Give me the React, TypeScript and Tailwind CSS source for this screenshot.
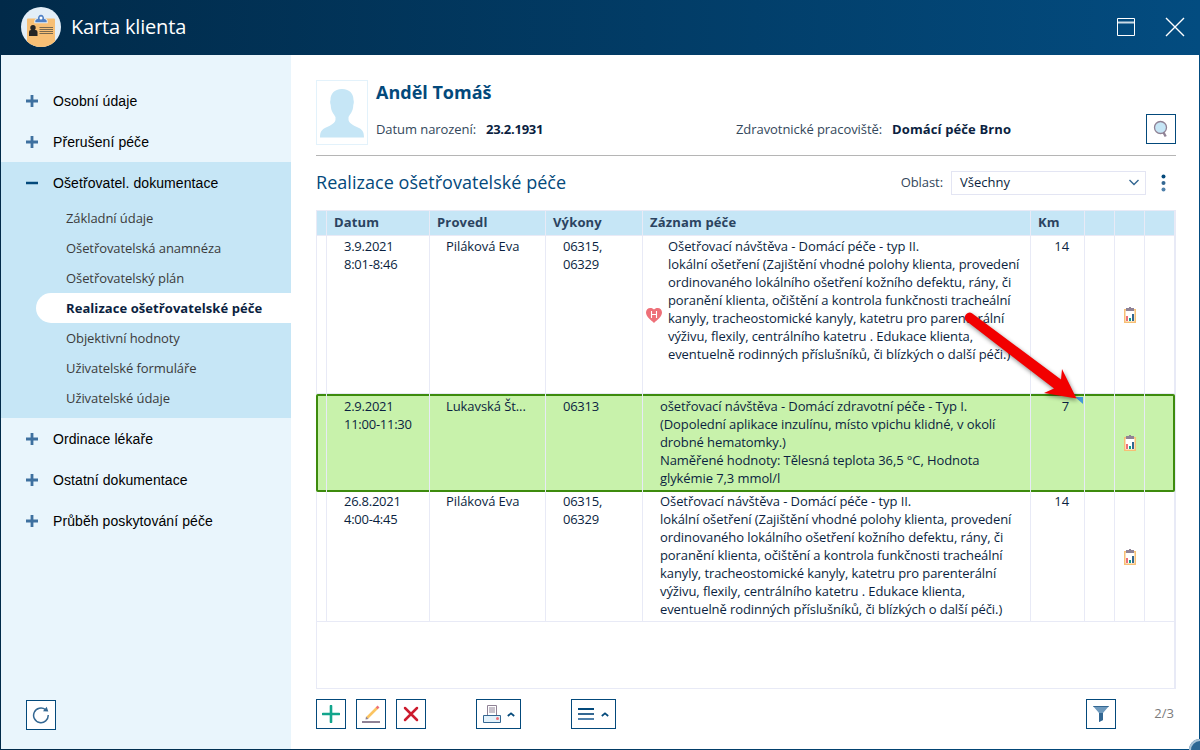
import type { ReactNode } from "react";
import clsx from "clsx";

const sections = ["Osobní údaje", "Přerušení péče"];
const bottomSections = ["Ordinace lékaře", "Ostatní dokumentace", "Průběh poskytování péče"];
const subItems = [
  "Základní údaje",
  "Ošetřovatelská anamnéza",
  "Ošetřovatelský plán",
  "Realizace ošetřovatelské péče",
  "Objektivní hodnoty",
  "Uživatelské formuláře",
  "Uživatelské údaje",
];
const activeItem = "Realizace ošetřovatelské péče";

const columns = ["", "Datum", "Provedl", "Výkony", "Záznam péče", "Km", "", "", ""];

const careNote = [
  "Ošetřovací návštěva - Domácí péče - typ II.",
  "lokální ošetření (Zajištění vhodné polohy klienta, provedení",
  "ordinovaného lokálního ošetření kožního defektu, rány, či",
  "poranění klienta, očištění a kontrola funkčnosti tracheální",
  "kanyly, tracheostomické kanyly, katetru pro parenterální",
  "výživu, flexily, centrálního katetru . Edukace klienta,",
  "eventuelně rodinných příslušníků, či blízkých o další péči.)",
];

type Visit = {
  id: number;
  date: string[];
  nurse: string;
  codes: string[];
  note: string[];
  km: number;
  hospital?: boolean;
  selected?: boolean;
  height: string;
};

const visits: Visit[] = [
  {
    id: 1,
    date: ["3.9.2021", "8:01-8:46"],
    nurse: "Piláková Eva",
    codes: ["06315,", "06329"],
    note: careNote,
    km: 14,
    hospital: true,
    height: "h-[158px]",
  },
  {
    id: 2,
    date: ["2.9.2021", "11:00-11:30"],
    nurse: "Lukavská Št...",
    codes: ["06313"],
    note: [
      "ošetřovací návštěva - Domácí zdravotní péče - Typ I.",
      "(Dopolední aplikace inzulínu, místo vpichu klidné, v okolí",
      "drobné hematomky.)",
      "Naměřené hodnoty: Tělesná teplota 36,5 °C, Hodnota",
      "glykémie 7,3 mmol/l",
    ],
    km: 7,
    selected: true,
    height: "h-[98px]",
  },
  {
    id: 3,
    date: ["26.8.2021", "4:00-4:45"],
    nurse: "Piláková Eva",
    codes: ["06315,", "06329"],
    note: careNote,
    km: 14,
    height: "h-[130px]",
  },
];

const gridCols = "grid grid-cols-[10px_103px_116px_97px_388px_54px_30px_30px_30px]";

function Lines({ items }: { items: string[] }) {
  return (
    <div>
      {items.map((line) => (
        <p key={line} className="whitespace-nowrap">
          {line}
        </p>
      ))}
    </div>
  );
}

function ToolButton({ wide, children }: { wide?: boolean; children: ReactNode }) {
  return (
    <button
      className={clsx(
        "flex h-[30px] items-center justify-center border border-[#03497b] bg-white",
        wide ? "w-[45px]" : "w-[30px]"
      )}
    >
      {children}
    </button>
  );
}

function CardLogo() {
  return (
    <svg width="40" height="40" viewBox="0 0 40 40">
      <clipPath id="logo">
        <circle cx="20" cy="20" r="20" />
      </clipPath>
      <g clipPath="url(#logo)">
        <rect width="40" height="40" fill="#e3eef7" />
        <rect x="6" y="11.500" width="28" height="30" rx="1" fill="#f7bf75" />
        <path
          d="M14.300 15.300v-1c0-1.500 1-2 2.500-2.300C17 9.500 18 7.800 20 7.800s3 1.700 3.200 4.200c1.500.3 2.500.8 2.500 2.300v1z"
          fill="#5080c4"
          stroke="#e3eef7"
          strokeWidth="2"
          paintOrder="stroke"
        />
        <circle cx="20" cy="11" r="1.500" fill="#fff" />
        <circle cx="12" cy="20.700" r="2.700" fill="#252525" />
        <path d="M8 29v-4q0-2 2-2h4.500q2 0 2 2v4z" fill="#252525" />
        <path d="M18.500 20.500h13.500M18.500 22.500h13.500M18.500 24.500h13.500M18.500 26.500h13.500" stroke="#77684f" strokeWidth="1" />
      </g>
    </svg>
  );
}

function PlusIcon() {
  return (
    <svg width="12" height="12" viewBox="0 0 12 12">
      <path d="M6 0v12M0 6h12" stroke="#3e709f" strokeWidth="2.800" />
    </svg>
  );
}

function ReportIcon() {
  return (
    <svg width="12" height="16" viewBox="0 0 12 16">
      <path d="M.75 2.750h10.500v12.500H.75z" fill="#fff" stroke="#f7bf75" strokeWidth="1.500" />
      <path d="M2 1h3V0h2v1h3v3H2z" fill="#8f8295" />
      <path d="M2 9h2v5H2z" fill="#ee7079" />
      <path d="M5 11h2v3H5z" fill="#12a18a" />
      <path d="M8 7h2v7H8z" fill="#336792" />
    </svg>
  );
}

function HeartIcon() {
  return (
    <svg width="16" height="15" viewBox="0 0 16 15">
      <path d="M8 15C5 12 0 9 0 4.500C0 2 1.800 0 4.300 0C6 0 7.300.7 8 1.500C8.700.7 10 0 11.700 0C14.200 0 16 2 16 4.500C16 9 11 12 8 15z" fill="#ee7079" />
      <path d="M5.500 3v7M10.500 3v7M5.500 6.500h5" stroke="#fff" strokeWidth="1.100" />
    </svg>
  );
}

function CaretUp() {
  return (
    <svg width="8" height="5" viewBox="0 0 8 5">
      <path d="M.8 4L4 1.300L7.200 4" fill="none" stroke="#03497b" strokeWidth="1.700" />
    </svg>
  );
}

function SectionRow({ label }: { label: string }) {
  return (
    <li className="flex h-[41px] items-center gap-[15px] pl-[25px]">
      <PlusIcon />
      <span className="pt-[2px]">{label}</span>
    </li>
  );
}

function Sidebar() {
  return (
    <aside className="flex w-[290px] shrink-0 flex-col bg-[#e9f5fc] pt-[25px] pb-[19px] font-['Liberation_Sans',Arial,sans-serif] text-[14px] tracking-[0.08px] text-black">
      <ul>
        {sections.map((label) => (
          <SectionRow key={label} label={label} />
        ))}
      </ul>
      <div className="h-[256px] bg-[#c6e6f6]">
        <div className="flex h-[41px] items-center gap-[15px] pl-[25px]">
          <svg width="12" height="12" viewBox="0 0 12 12">
            <path d="M0 6h12" stroke="#03497b" strokeWidth="2.500" />
          </svg>
          <span className="pt-[2px]">Ošetřovatel. dokumentace</span>
        </div>
        <ul className="font-['Open_Sans',sans-serif] text-[13px] tracking-[-0.08px] text-[#3b3b3b]">
          {subItems.map((item) => (
            <li
              key={item}
              className={clsx(
                "ml-[35px] flex h-[30px] items-center pt-[2px] pl-[30px]",
                item === activeItem && "rounded-l-full bg-white font-bold tracking-[0.07px] text-[#0b1f41]"
              )}
            >
              {item}
            </li>
          ))}
        </ul>
      </div>
      <ul>
        {bottomSections.map((label) => (
          <SectionRow key={label} label={label} />
        ))}
      </ul>
      <div className="mt-auto pl-[25px]">
        <ToolButton>
          <svg width="18" height="18" viewBox="0 0 18 18" fill="none">
            <path d="M16.200 9A7.300 7.300 0 1 1 13.500 3.700" stroke="#336792" strokeWidth="1.500" />
            <path d="M14.700.8l1.600 4.700-5.300-.3z" fill="#336792" />
          </svg>
        </ToolButton>
      </div>
    </aside>
  );
}

function ClientHeader() {
  return (
    <div className="flex h-[76px] border-b border-[#b5b5b5]">
      <div className="flex h-[65px] w-[52px] justify-center border border-[#e3f2fb] pt-2">
        <svg width="44" height="49" viewBox="0 0 44 49">
          <path d="M22 0C30 0 33.500 5 33.500 11C34 12 34 14 33.300 16C33 23 30 25 28.500 28V31C29.500 35 35 37 39 39C43 41 44 44 44 48.500H0C0 44 1 41 5 39C9 37 14.500 35 15.500 31V28C14 25 11 23 10.700 16C10 14 10 12 10.500 11C10.500 5 14 0 22 0z" fill="#c6e6f6" />
        </svg>
      </div>
      <div className="flex flex-1 flex-col pl-2">
        <h1 className="text-lg leading-6 font-bold text-[#03497b]">Anděl Tomáš</h1>
        <div className="mt-[15px] flex leading-[20px] tracking-[-0.07px] text-[#33475b]">
          <span className="w-[110px]">Datum narození:</span>
          <b className="w-[250px] tracking-[-0.25px] text-[#0b1f41]">23.2.1931</b>
          <span className="w-[156px]">Zdravotnické pracoviště:</span>
          <b className="tracking-[0.12px] text-[#0b1f41]">Domácí péče Brno</b>
        </div>
      </div>
      <div className="pt-[34px]">
        <ToolButton>
          <svg width="16" height="18" viewBox="0 0 16 18">
            <path d="M10.500 12.500l2.200 4" stroke="#8f8295" strokeWidth="2.400" />
            <circle cx="7.500" cy="7.500" r="6" fill="#c6e6f6" stroke="#8f8295" strokeWidth="1.300" />
          </svg>
        </ToolButton>
      </div>
    </div>
  );
}

function VisitRow({ visit }: { visit: Visit }) {
  const cell = "border-l border-[#e8eaf6]";
  const textCell = clsx(cell, visit.selected ? "pt-[3px]" : visit.hospital ? "pt-px" : "");
  return (
    <div
      className={clsx(
        gridCols,
        visit.height,
        visit.selected
          ? "relative -mr-px rounded-[2px] bg-[#c8f2ab] shadow-[inset_0_0_0_2px_#3d8b0d]"
          : "border-b border-[#e8eaf6]"
      )}
    >
      <div className={visit.selected ? "" : cell} />
      <div className={clsx(textCell, "pl-[17px] tracking-[-0.25px]")}>
        <Lines items={visit.date} />
      </div>
      <div className={clsx(textCell, "pl-4")}>{visit.nurse}</div>
      <div className={clsx(textCell, "pl-[17px] tracking-[-0.25px]")}>
        <Lines items={visit.codes} />
      </div>
      <div className={clsx(textCell, "flex", visit.hospital ? "pl-[3px]" : "pl-[17px]")}>
        {visit.hospital && (
          <div className="mr-[6px] flex items-center">
            <HeartIcon />
          </div>
        )}
        <Lines items={visit.note} />
      </div>
      <div className={clsx(textCell, "relative pr-[15px] text-right")}>
        {visit.km}
        {visit.selected && (
          <svg className="absolute top-[3px] right-px" width="8" height="7" viewBox="0 0 8 7">
            <path d="M0 0h8v7z" fill="#4398d8" />
          </svg>
        )}
      </div>
      <div className={cell} />
      <div className={clsx(cell, "flex items-center justify-center")}>
        <ReportIcon />
      </div>
      <div className={cell} />
    </div>
  );
}

function VisitTable() {
  return (
    <div className="relative mt-[15px] h-[479px] border-r-2 border-b border-[#e8eaf6] text-[13px] leading-[18px] tracking-[-0.085px] text-[#0b1f41]">
      <div className={clsx(gridCols, "h-[26px] border-y border-[#e8eaf6] bg-[#c6e6f6] leading-[23px] font-bold tracking-[0.16px] text-[#2b4360]")}>
        {columns.map((name, i) => (
          <div key={i} className="border-l border-[#e8eaf6] pl-[7px]">
            {name}
          </div>
        ))}
      </div>
      {visits.map((visit) => (
        <VisitRow key={visit.id} visit={visit} />
      ))}
      <div className="h-[66px] border-l border-[#e8eaf6]" />
      {/* pointer to the km note */}
      <svg className="absolute top-[95px] left-[639px] drop-shadow-[1px_2px_2px_rgba(0,0,0,0.45)]" width="130" height="110" viewBox="0 0 130 110">
        <path d="M17.300 8.400L106 74.500L107 64L121.500 93.500L89 88L99 83.500L10.700 15.600A5 5 0 0 1 17.300 8.400z" fill="#f20000" />
      </svg>
    </div>
  );
}

function Toolbar() {
  return (
    <div className="mt-[10px] flex items-center">
      <ToolButton>
        <svg width="18" height="18" viewBox="0 0 18 18">
          <path d="M9 1v16M1 9h16" stroke="#12a58c" strokeWidth="2.600" strokeLinecap="round" />
        </svg>
      </ToolButton>
      <div className="ml-[10px]">
        <ToolButton>
          <svg width="18" height="20" viewBox="0 0 18 20">
            <path d="M5 14L15.500 3.500" stroke="#fbc462" strokeWidth="2.600" />
            <path d="M14.700 4.300L16.500 2.500" stroke="#ee7079" strokeWidth="2.600" />
            <path d="M4 12.500L6.500 15L3.500 15.500z" fill="#8f8295" />
            <path d="M0 18h18" stroke="#8f8295" strokeWidth="2" />
          </svg>
        </ToolButton>
      </div>
      <div className="ml-[10px]">
        <ToolButton>
          <svg width="16" height="16" viewBox="0 0 16 16">
            <path d="M2 2l12 12M14 2L2 14" stroke="#cc1c2e" strokeWidth="2.500" strokeLinecap="round" />
          </svg>
        </ToolButton>
      </div>
      <div className="ml-[50px]">
        <ToolButton wide>
          <svg width="18" height="18" viewBox="0 0 18 18" className="mr-[6px]">
            <path d="M4.500.5h9v10h-9z" fill="#fff" stroke="#8f8295" />
            <path d="M6 2h6v6H6z" fill="#c8c2cc" />
            <path d="M.5 10.500h17v7H.5z" fill="#e3f2fb" stroke="#336792" />
            <circle cx="14.500" cy="13.500" r="1.500" fill="#ee7079" />
          </svg>
          <CaretUp />
        </ToolButton>
      </div>
      <div className="ml-[50px]">
        <ToolButton wide>
          <svg width="16" height="12" viewBox="0 0 16 12" className="mr-[7px]">
            <path d="M0 1h16" stroke="#03497b" strokeWidth="2" />
            <path d="M0 6h16" stroke="#336792" strokeWidth="2" />
            <path d="M0 11h16" stroke="#4f80aa" strokeWidth="2" />
          </svg>
          <CaretUp />
        </ToolButton>
      </div>
      <div className="ml-auto">
        <ToolButton>
          <svg width="16" height="16" viewBox="0 0 16 16">
            <path d="M0 0h16L10 7v7l-4 2V7z" fill="#6f9abd" />
            <path d="M0 0h16l-.8 1H.8zM6 7h4v7l-4 2z" fill="#336792" />
          </svg>
        </ToolButton>
      </div>
      <span className="w-[60px] pr-[2px] text-right text-[#7b7b7b]">2/3</span>
    </div>
  );
}

export default function App() {
  return (
    <div className="relative flex h-[750px] w-[1200px] flex-col overflow-hidden bg-linear-to-r from-[#012a49] to-[#034c80] px-px pb-px font-['Open_Sans',sans-serif] text-[13px]">
      <header className="flex h-[55px] shrink-0 items-center pb-px pl-5 text-white">
        <CardLogo />
        <span className="ml-[10px] text-xl tracking-[-0.17px]">Karta klienta</span>
        <svg className="ml-auto" width="18" height="18" viewBox="0 0 18 18" fill="none" stroke="#fff">
          <path d="M.5.500h17v17H.5z" />
          <path d="M1 4.500h16" strokeWidth="2" opacity=".8" />
        </svg>
        <svg className="mr-[14px] ml-[30px]" width="20" height="20" viewBox="0 0 20 20" fill="none" stroke="#fff" strokeWidth="1.400">
          <path d="M1 1l18 18M19 1L1 19" />
        </svg>
      </header>
      <div className="flex min-h-0 flex-1">
        <Sidebar />
        <main className="flex min-w-0 flex-1 flex-col bg-white pt-[25px] pr-[23px] pl-[25px]">
          <ClientHeader />
          <div className="mt-[14px] flex h-[25px] items-center">
            <h2 className="-mt-[2px] text-lg tracking-[0.04px] text-[#03497b]">Realizace ošetřovatelské péče</h2>
            <span className="ml-auto tracking-[-0.07px] text-[#33475b]">Oblast:</span>
            <div className="ml-2 flex h-6 w-[195px] items-center justify-between border border-[#e3e5f3] pr-[6px] pl-2 text-[#0b1f41]">
              Všechny
              <svg width="10" height="7" viewBox="0 0 10 7" fill="none">
                <path d="M.5 1L5 5.500L9.500 1" stroke="#336792" strokeWidth="1.400" />
              </svg>
            </div>
            <svg className="mr-[10px] ml-[15px]" width="5" height="18" viewBox="0 0 5 18">
              <circle cx="2.500" cy="2.500" r="2" fill="#03497b" />
              <circle cx="2.500" cy="9" r="2" fill="#336792" />
              <circle cx="2.500" cy="15.500" r="2" fill="#4f80aa" />
            </svg>
          </div>
          <VisitTable />
          <Toolbar />
        </main>
      </div>
      <div className="absolute -right-[11px] -bottom-[11px] size-[22px] rounded-full bg-[#2d6793] shadow-[inset_0_0_0_2px_#a9c3d6]" />
    </div>
  );
}
